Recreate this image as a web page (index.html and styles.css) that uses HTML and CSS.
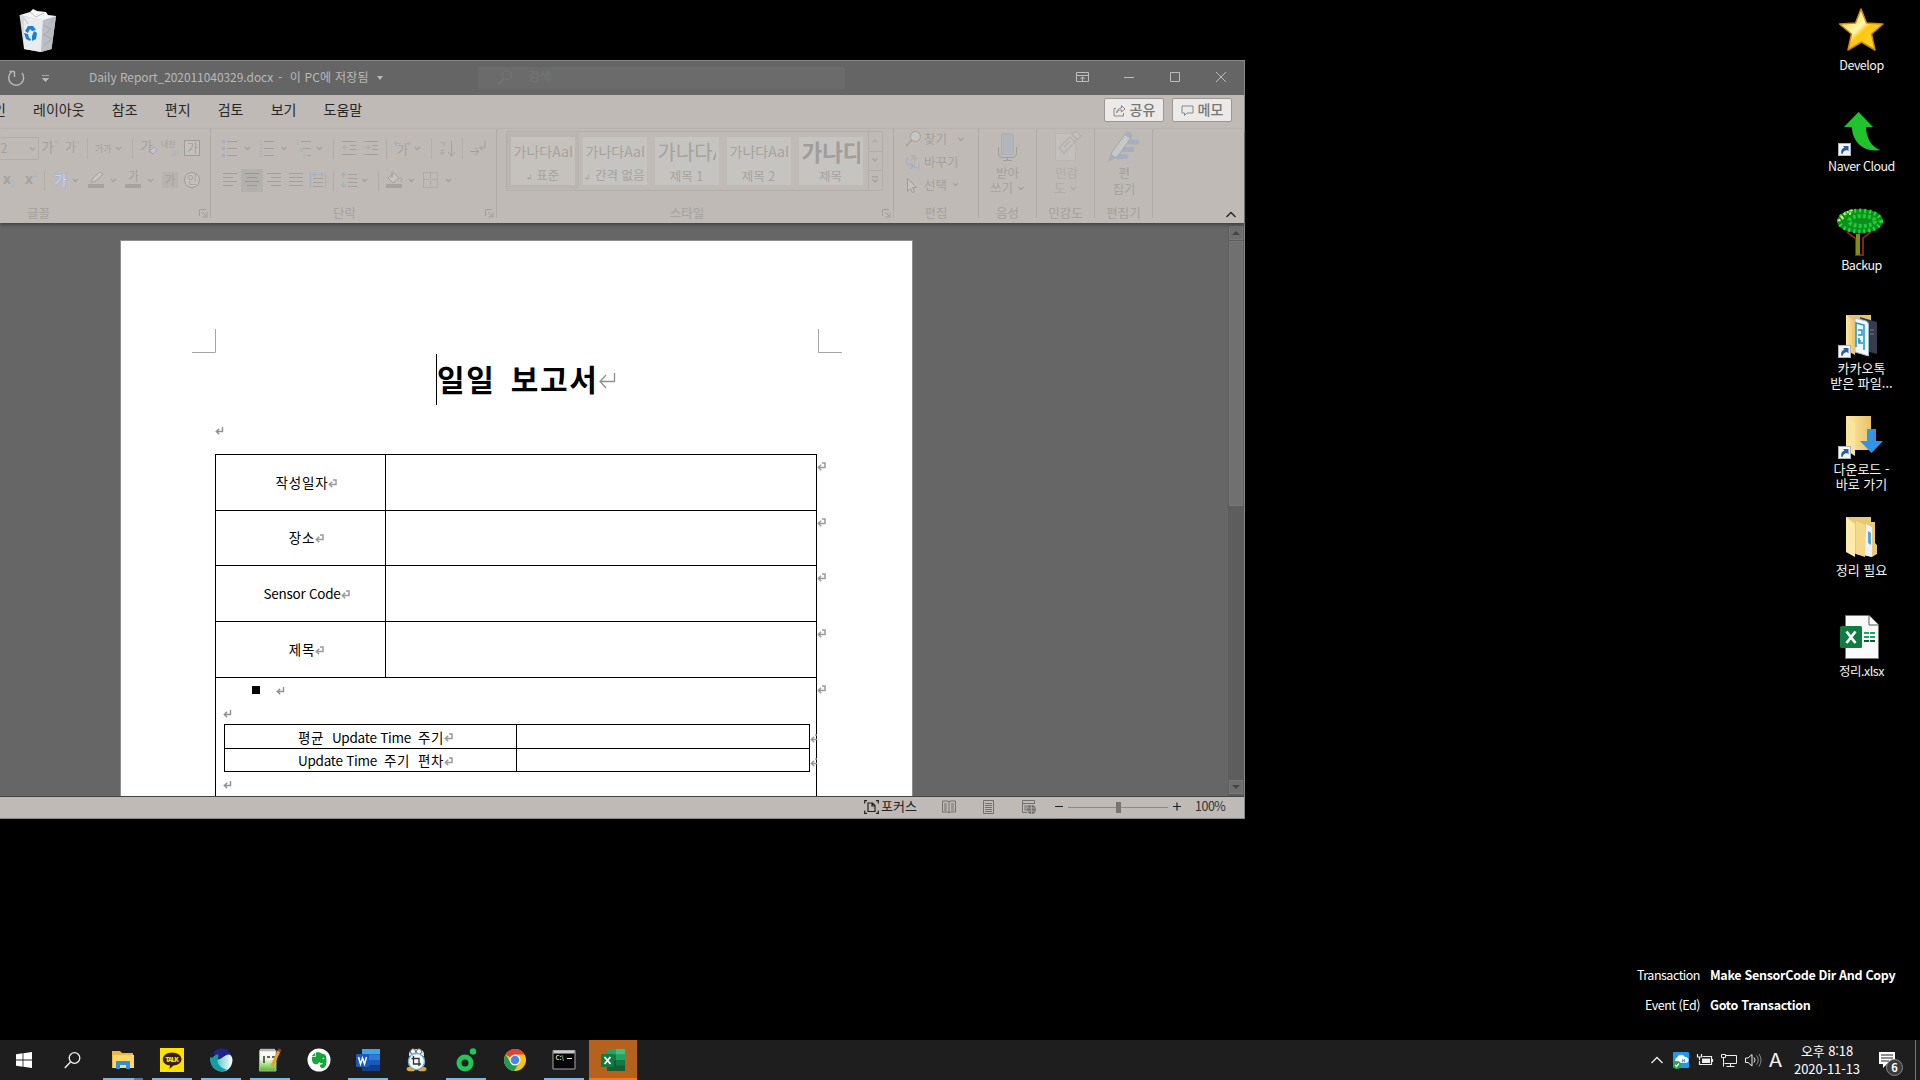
FILE: index.html
```html
<!DOCTYPE html>
<html lang="ko">
<head>
<meta charset="utf-8">
<title>Daily Report_202011040329.docx</title>
<link rel="stylesheet" href="styles.css">
</head>
<body>
<svg class="defs" width="0" height="0" aria-hidden="true">
  <defs>
    <symbol id="ret" viewBox="0 0 9 9"><path d="M5 1H8V5.500H1.500M4.200 2.800L1.300 5.500 4.200 8.200" fill="none" stroke="#9a9a9a" stroke-width="1.500"/></symbol>
    <symbol id="para" viewBox="0 0 9 9"><path d="M7.500 1V5.500H1.500M4.200 2.800L1.300 5.500 4.200 8.200" fill="none" stroke="#8f8f8f" stroke-width="1.400"/></symbol>
    <symbol id="chev" viewBox="0 0 8 6"><path d="M1.500 1.500L4 4 6.500 1.500" fill="none" stroke="#a5a19d" stroke-width="1.300"/></symbol>
    <symbol id="launch" viewBox="0 0 9 9"><path d="M.5 7V.5H7M3 3L7.500 7.500M8 3.500V8H3.500" fill="none" stroke="#a19d99"/></symbol>
    <symbol id="shortcut" viewBox="0 0 13 13"><rect x=".5" y=".5" width="12" height="12" fill="#f4f6f9" stroke="#a9b3bd"/><path d="M3.500 11C2.500 7 4.500 5 6.500 4.500L5 3H10.500V8.500L9 7C6.500 7.500 5 8.500 4.500 11Z" fill="#2c5d9e"/></symbol>
    <linearGradient id="fold" x1="0" x2="1"><stop offset="0" stop-color="#ffe9a6"/><stop offset="1" stop-color="#e8c268"/></linearGradient>
    <linearGradient id="gold" x1="0" x2="1" y2="1"><stop offset="0" stop-color="#ffce1c"/><stop offset=".45" stop-color="#fff7b0"/><stop offset=".55" stop-color="#ffc60d"/><stop offset="1" stop-color="#ffe24a"/></linearGradient>
    <linearGradient id="npp" x1="0" x2="0" y1="0" y2="1"><stop offset="0" stop-color="#fff"/><stop offset=".45" stop-color="#e9f7d8"/><stop offset="1" stop-color="#58b81d"/></linearGradient>
    <linearGradient id="whale" x1="0" x2="1"><stop offset="0" stop-color="#1ba8b0"/><stop offset=".6" stop-color="#9fe0de"/><stop offset="1" stop-color="#fff"/></linearGradient>
  </defs>
</svg>

<main class="desktop">
  <div class="shortcut bin">
    <svg width="40" height="46" viewBox="18 6 40 46"><path d="M19.500 15L56 16 51.500 49 41 52 24 49Z" fill="#d5d9dd"/><path d="M24 17L43 20 41 52 24 49Z" fill="#e9ecef"/><path d="M43 20L56 16 51.500 49 41 52Z" fill="#b9bec3"/><path d="M20 15L30 12 33 9 37 11 46 12 48 15 56 16 43 20Z" fill="#f5f6f7"/><path d="M43 25l8 4-7 6 8 4-8 6M56 17l-6 6M30 12l6 5 8-4M24 18l4 6" stroke="#969ca3" fill="none" opacity=".6"/><path d="M25 31L28 26 33 26 36 30 32 31 30 29 28 33ZM34 31L37 33 36 39 32 41 32 36ZM24 33L28 34 29 38 31 39 30 41 26 39Z" fill="#1680d8"/></svg>
  </div>
  <div class="shortcut develop">
    <svg width="46" height="46" viewBox="1838 6 46 46"><path d="M1861 9L1866.500 23 1883 24 1871.500 34 1875 50 1861.500 42 1848 50 1851.500 34 1839.500 24 1855.500 23Z" fill="url(#gold)" stroke="#c98a10" stroke-width="1.500" stroke-linejoin="round"/></svg>
    <span class="name en">Develop</span>
  </div>
  <div class="shortcut naver">
    <svg width="46" height="46" viewBox="1838 111 46 46"><path d="M1858.500 112L1873 127H1866C1866 138 1872 148 1881 150 1864 153 1852 142 1852 127H1844Z" fill="#1fc32c"/><use href="#shortcut" x="1838" y="143" width="13" height="13"/></svg>
    <span class="name en">Naver Cloud</span>
  </div>
  <div class="shortcut backup">
    <svg width="50" height="48" viewBox="1837 208 50 48"><path d="M1848 232L1857 239V255H1864V238L1872 232" fill="none" stroke="#7a2b12" stroke-width="2"/><path d="M1857 234H1861V255H1857Z" fill="#8b8a12"/><ellipse cx="1861" cy="221" rx="23" ry="12" fill="#0b8f1c"/><ellipse cx="1861" cy="221" rx="21" ry="10.500" fill="none" stroke="#1fdc35" stroke-width="4" stroke-dasharray="2 3"/><ellipse cx="1863" cy="221" rx="13" ry="5" fill="none" stroke="#22c83a" stroke-width="4" stroke-dasharray="3 2"/><path d="M1840 221q3-8 14-11M1843 219l3-3M1850 214l4-1" stroke="#dff77c" stroke-width="2" stroke-dasharray="2 2" fill="none"/></svg>
    <span class="name en">Backup</span>
  </div>
  <div class="shortcut kakao">
    <svg width="46" height="46" viewBox="1838 313 46 46"><path d="M1846 315H1871V330H1846Z" fill="#e9c46e"/><path d="M1860 317L1877 322V354L1866 351Z" fill="#343c4e"/><path d="M1855 318L1866 321Q1869 322 1868.500 326V356L1855 352Z" fill="#f3f8fb" stroke="#9db9c9"/><path d="M1856 347V323L1864 325V350M1858 330h4v5h-4M1859 338v5h4M1858 341h3" fill="none" stroke="#1a96cf" stroke-width="1.500"/><path d="M1846 315L1855 322V355L1846 350Z" fill="url(#fold)"/><path d="M1870 330h4M1870 334h4" stroke="#79808f"/><use href="#shortcut" x="1838" y="345" width="13" height="13"/></svg>
    <span class="name">카카오톡<br>받은 파일...</span>
  </div>
  <div class="shortcut download">
    <svg width="46" height="46" viewBox="1838 414 46 46"><path d="M1846 416H1871V450H1846Z" fill="url(#fold)"/><path d="M1846 416L1855 423V456L1846 450Z" fill="#fbe49c"/><path d="M1867 429H1876V441H1883L1871.500 453 1860 441H1867Z" fill="#3195e6"/><use href="#shortcut" x="1838" y="446" width="13" height="13"/></svg>
    <span class="name">다운로드 -<br>바로 가기</span>
  </div>
  <div class="shortcut tidy">
    <svg width="46" height="46" viewBox="1838 515 46 46"><path d="M1846 517H1871V522L1875 522V543L1877 545V554L1872 557 1846 552Z" fill="#ebc972"/><path d="M1866 524L1872 527V557L1865 555Z" fill="#edf3f7"/><path d="M1868 531l3 2v12l-3-2Z" fill="#5da3d0"/><path d="M1856 521L1865 525V557L1856 554Z" fill="#f4d98b"/><path d="M1846 517L1855 524V557L1846 552Z" fill="#ffebac"/></svg>
    <span class="name">정리 필요</span>
  </div>
  <div class="shortcut excel">
    <svg width="46" height="46" viewBox="1838 614 46 46"><path d="M1845.500 615.500H1869L1878.500 625V658.500H1845.500Z" fill="#fafafa" stroke="#777"/><path d="M1869 615.500V625H1878.500" fill="#fff" stroke="#555"/><path d="M1864 632h5v2h-5zM1870 632h5v2h-5zM1864 636h5v2h-5zM1870 636h5v2h-5z" fill="#21a366"/><path d="M1864 640h5v2h-5zM1870 640h5v2h-5z" fill="#0f5c36"/><rect x="1840" y="626" width="22" height="22" rx="1.500" fill="#107c41"/><path d="M1846.500 631.500L1855.500 643M1855.500 631.500L1846.500 643" stroke="#fff" stroke-width="2.700"/></svg>
    <span class="name en">정리.xlsx</span>
  </div>

  <section class="window">
    <header class="titlebar">
      <svg class="quick" width="60" height="34" viewBox="0 61 60 34"><path d="M22 73A7.500 7.500 0 1 1 12 71.500M9.500 71.500H14.500M14.500 71.500V77" fill="none" stroke="#b9b9b9" stroke-width="1.400"/><path d="M42 75.500H49M42.500 78.500H48.500L45.500 81.500Z" fill="#b9b9b9" stroke="#b9b9b9" stroke-width=".8"/></svg>
      <div class="doc-name"><span class="file">Daily Report_202011040329.docx</span><span class="saved">- &nbsp;이 PC에 저장됨</span><i class="caret-down"></i></div>
      <div class="search"><svg width="17" height="17" viewBox="0 0 17 17"><circle cx="10" cy="6" r="4.500" fill="none" stroke="#767676"/><path d="M7 9.500L1 15.500" stroke="#767676" stroke-width="1.500"/></svg><span>검색</span></div>
      <svg class="controls" width="160" height="34" viewBox="1070 61 160 34"><g fill="none" stroke="#bdbdbd"><path d="M1076.500 72.500H1088.500V81.500H1076.500ZM1076.500 75.500H1088.500M1082.500 81V77M1080.500 79L1082.500 76.800 1084.500 79M1124 77.500H1134M1170.500 72.500H1179.500V81.500H1170.500ZM1216 72L1226 82M1226 72L1216 82"/></g></svg>
    </header>

    <nav class="tabs">
      <span class="tab-cut">인</span><span>레이아웃</span><span>참조</span><span>편지</span><span>검토</span><span>보기</span><span>도움말</span>
      <div class="actions">
        <button class="act"><svg width="13" height="13" viewBox="0 0 13 13"><path d="M3 4.500H1V12H10.500V9M3.500 9C4 5.500 6 4 8.500 4V1.500L12 5 8.500 8V6C6 6 4.500 7 3.500 9Z" fill="none" stroke="#888"/></svg><span>공유</span></button>
        <button class="act"><svg width="13" height="13" viewBox="0 0 13 13"><path d="M1 2H12V9H6L3.500 11.500V9H1Z" fill="none" stroke="#888"/></svg><span>메모</span></button>
      </div>
    </nav>

    <div class="ribbon">
      <div class="group g-font">
        <svg width="210" height="70" viewBox="0 129 210 70">
          <g class="rt"><path d="M-5 137.500H38.500V159.500H-5" fill="none" stroke="#b1aca9"/>
          <text x="-7" y="153" font-size="13">22</text><text x="41" y="152" font-size="14">가</text><text x="65" y="152" font-size="12">가</text>
          <text x="95" y="152" font-size="9">가가</text><text x="140" y="151" font-size="14">가</text>
          <text x="161" y="147" font-size="8">내천</text><text x="171" y="156" font-size="8" fill="#a9b1bd">川</text>
          <rect x="184.500" y="140.500" width="15" height="15" fill="#c3c0bd" stroke="#9f9b98"/><text x="187" y="153" font-size="12">가</text>
          <text x="3" y="184" font-size="14" font-weight="700">x</text><text x="11" y="187" font-size="7" fill="#a3b4cc">2</text>
          <text x="25" y="184" font-size="14" font-weight="700">x</text><text x="33" y="177" font-size="7" fill="#a3b4cc">2</text>
          <text x="54" y="185" font-size="14" stroke="#a9b8cf" stroke-width="2" paint-order="stroke" fill="#ccd2da">가</text>
          <text x="128" y="181" font-size="12">가</text><rect x="162" y="172" width="16" height="16" fill="#b8b3af"/><text x="164.500" y="185" font-size="12">가</text>
          <circle cx="192" cy="180" r="7.500" fill="#c4c1be" stroke="#a19d99"/><text x="187" y="184" font-size="11">인</text></g>
          <path d="M53.500 143L56 140.500 58.500 143M75.500 141L78 143.500 80.500 141" fill="none" stroke="#a3b0c2"/>
          <path d="M150 151l4-4 3 3-4 4zM150 151l2.500 3.500" fill="#cdbfcb" stroke="#b39fb2"/>
          <path d="M91 182l2-4 7-6 3 2-6 6-4 2z" fill="#c9c6c3" stroke="#a39f9b"/>
          <path d="M88 184h16v4H88zM125 184h16v4h-16z" fill="#a6a29f"/>
          <path class="sep" d="M87.500 138v21M132.500 138v21M44.500 170v21"/>
          <use href="#chev" x="28.500" y="146" width="8" height="6"/><use href="#chev" x="114.500" y="145.500" width="8" height="6"/><use href="#chev" x="71.500" y="177.500" width="8" height="6"/><use href="#chev" x="109.500" y="177.500" width="8" height="6"/><use href="#chev" x="146.500" y="177.500" width="8" height="6"/>
        </svg>
        <span class="glabel">글꼴</span><svg class="launcher" width="9" height="9"><use href="#launch"/></svg>
      </div>
      <div class="group g-para">
        <svg width="285" height="70" viewBox="211 129 285 70">
          <g fill="none" stroke="#a39f9b">
            <path d="M227 141.500h10M227 148.500h10M227 155.500h10M264 141.500h10M264 148.500h10M264 155.500h10M301 141.500h10M303 148.500h8M307 155.500h4"/>
            <path d="M342 141.500h14M350 145.500h6M350 149.500h6M342 154.500h14M364 141.500h14M372 145.500h6M372 149.500h6M364 154.500h14"/>
            <path d="M451.500 141v15M448 152l3.500 4 3.500-4M470 151.500h8M475 148l4 3.500-4 3.500M485 141v7h-5M482 145.500l-2.500 2.500 2.500 2.500"/>
            <path d="M223 173.500h14M223 177.500h10M223 181.500h14M223 185.500h10M267 173.500h14M271 177.500h10M267 181.500h14M271 185.500h10M289 173.500h14M289 177.500h14M289 181.500h14M289 185.500h14M313 178.500h10M313 182.500h10M313 186.500h10M348 174.500h9M348 178.500h9M348 182.500h9M348 186.500h9"/>
          </g>
          <rect x="241" y="169" width="22" height="23" fill="#b2b0ac"/><path d="M245 173.500h14M247 177.500h10M245 181.500h14M247 185.500h10" stroke="#9a9794"/>
          <path d="M222 140h3v3h-3zM222 147h3v3h-3zM222 154h3v3h-3z" fill="#a3afc0"/>
          <g fill="none" stroke="#a3b1c6" stroke-width="1.200"><path d="M343 147.500h6M345.500 145l-2.500 2.500 2.500 2.500M364 147.500h6M367.500 145l2.500 2.500-2.500 2.500M395 143.500h6M397 141l-2.500 2.500 2.500 2.500M404 143.500h6M407.500 141l2.500 2.500-2.500 2.500M310.500 172v16M325.500 172v16M313 174.500h10M315 172.500l-2 2 2 2M321 172.500l2 2-2 2M343.500 173v5M341 175.500l2.500-2.500 2.500 2.500M343.500 182v5M341 184.500l2.500 2.500 2.500-2.500"/></g>
          <g class="rt"><text x="259" y="145" font-size="6" fill="#a3afc0">1</text><text x="259" y="151.500" font-size="6" fill="#a3afc0">2</text><text x="259" y="158" font-size="6" fill="#a3afc0">3</text><text x="296" y="145" font-size="6" fill="#a3afc0">1</text><text x="299" y="151.500" font-size="7" fill="#a3afc0">a</text><text x="303" y="158" font-size="7" fill="#a3afc0">i</text><text x="397" y="155" font-size="12">가</text><text x="438.500" y="147" font-size="8">ㄱ</text><text x="438.500" y="155" font-size="8">ㅎ</text></g>
          <path d="M388 178l6-5 5 5-6 5zM392 178v-7M400 177q3 2 1 5" fill="#c6c3c0" stroke="#a39f9b"/><path d="M386 184h16v4h-16z" fill="#a6a29f"/>
          <path d="M423.500 172.500h14v15h-14zM430.500 173v14M424 179.500h14" fill="none" stroke="#a39f9b" stroke-dasharray="1 1"/>
          <path class="sep" d="M333.500 138v21M386.500 138v21M431.500 138v21M462.500 138v21M333.500 170v21M378.500 170v21"/>
          <use href="#chev" x="243.500" y="145.500" width="8" height="6"/><use href="#chev" x="280" y="145.500" width="8" height="6"/><use href="#chev" x="315.500" y="145.500" width="8" height="6"/><use href="#chev" x="413.500" y="145.500" width="8" height="6"/><use href="#chev" x="360.500" y="177.500" width="8" height="6"/><use href="#chev" x="407.500" y="177.500" width="8" height="6"/><use href="#chev" x="444.500" y="177.500" width="8" height="6"/>
        </svg>
        <span class="glabel">단락</span><svg class="launcher" width="9" height="9"><use href="#launch"/></svg>
      </div>
      <div class="group g-styles">
        <div class="gallery">
          <div class="tile sel"><b class="s">가나다AaB</b><em><small>↲</small> 표준</em></div>
          <div class="tile"><b class="s">가나다AaB</b><em><small>↲</small> 간격 없음</em></div>
          <div class="tile"><b class="l">가나다A</b><em>제목 1</em></div>
          <div class="tile"><b class="s">가나다AaB</b><em>제목 2</em></div>
          <div class="tile"><b class="x">가나다</b><em>제목</em></div>
          <div class="spin"><svg width="8" height="6" class="up"><use href="#chev"/></svg><svg width="8" height="6"><use href="#chev"/></svg><svg width="8" height="8" viewBox="0 0 8 8"><path d="M1 .8H7M1.500 3.500L4 6 6.500 3.500" fill="none" stroke="#a19d99" stroke-width="1.200"/></svg></div>
        </div>
        <span class="glabel">스타일</span><svg class="launcher" width="9" height="9"><use href="#launch"/></svg>
      </div>
      <div class="group g-edit">
        <svg width="84" height="70" viewBox="894 129 84 70">
          <circle cx="915.500" cy="136.500" r="5" fill="#c8c6c3" stroke="#a39f9b"/><path d="M912 140L906 146" stroke="#a39f9b" stroke-width="1.500"/>
          <g class="rt"><text x="924" y="144" font-size="12.500">찾기</text><text x="924" y="167" font-size="12.500">바꾸기</text><text x="924" y="190" font-size="12.500">선택</text><text x="910" y="161" font-size="7">가</text><text x="913" y="169" font-size="8" fill="#a3b1c6">나</text></g>
          <path d="M908 157q-5 8 5 9M910 163l3.500 3-3.500 3" fill="none" stroke="#a3b1c6" stroke-width="1.500"/>
          <path d="M907.500 178.500V191.500L910.500 188.500 912.500 192.500 914.500 191.500 912.500 187.500H916.500Z" fill="#c5c3c0" stroke="#9f9b98"/>
          <use href="#chev" x="957" y="136.500" width="8" height="6"/><use href="#chev" x="951.500" y="181.500" width="8" height="6"/>
        </svg>
        <span class="glabel">편집</span>
      </div>
      <div class="group g-small">
        <svg width="57" height="70" viewBox="979 129 57 70">
          <rect x="1001.500" y="133.500" width="12" height="21" rx="1" fill="#b2b6bb" stroke="#a4b0c2"/><path d="M998.500 147V153Q998.500 157.500 1003 157.500H1012Q1016.500 157.500 1016.500 153V147M1007.500 157.500V160.500M1003 160.500H1012" fill="none" stroke="#a19d99"/>
          <g class="rt"><text x="996" y="178" font-size="12.500">받아</text><text x="990" y="193" font-size="12.500">쓰기</text></g><use href="#chev" x="1017" y="185.500" width="8" height="6"/>
        </svg>
        <span class="glabel">음성</span>
      </div>
      <div class="group g-small">
        <svg width="57" height="70" viewBox="1037 129 57 70">
          <rect x="1055.500" y="133.500" width="20" height="27" fill="#c3bfbc" stroke="#b9b5b1"/><path d="M1059 148l11-11 5 5-11 11zM1064 147l6-6M1072 134l4-3 5 5-4 4z" fill="#c3c0bc" stroke="#b3afac" stroke-width="1.300"/>
          <g class="rt dim"><text x="1055" y="178" font-size="12.500">민감</text><text x="1054" y="193" font-size="12.500">도</text></g><use href="#chev" x="1069.500" y="185.500" width="8" height="6" opacity=".6"/>
        </svg>
        <span class="glabel">민감도</span>
      </div>
      <div class="group g-small">
        <svg width="57" height="70" viewBox="1095 129 57 70">
          <path d="M1130 142h7M1124 149.500h8M1118 156.500h8" stroke="#a4b0c2" stroke-width="5" stroke-linecap="round"/><path d="M1109 161l3-9 14-19 6 3-14 20z" fill="#c8c7c5" stroke="#a4a6aa"/><path d="M1109 161l2.500-7 4.500 3.500zM1124.500 135l3-4 5 3-2.500 4.500z" fill="#a4b0c2"/>
          <g class="rt"><text x="1118.500" y="178" font-size="12.500">편</text><text x="1112.500" y="193.500" font-size="12.500">집기</text></g>
        </svg>
        <span class="glabel">편집기</span>
      </div>
      <svg class="collapse" width="12" height="8" viewBox="0 0 12 8"><path d="M1.500 6L6 1.500 10.500 6" fill="none" stroke="#222" stroke-width="1.300"/></svg>
    </div>

    <div class="workspace">
      <article class="page">
        <svg class="corner left" width="24" height="24"><path d="M23.500 0V23.500H0" fill="none" stroke="#a6a6a6"/></svg>
        <svg class="corner right" width="24" height="24"><path d="M.5 0V23.500H24" fill="none" stroke="#a6a6a6"/></svg>
        <h1><i class="cursor"></i><span>일일 보고서</span><svg width="17" height="17" viewBox="0 0 17 17"><path d="M15.500 0V8.500H1M7 2L1 8.500 7 15" fill="none" stroke="#8f8f8f" stroke-width="1.300"/></svg></h1>
        <p class="blank"><svg class="mk"><use href="#para"/></svg></p>
        <div class="table">
          <div class="row"><div class="key"><span>작성일자</span><svg class="mk"><use href="#ret"/></svg></div><svg class="mk end"><use href="#ret"/></svg></div>
          <div class="row odd"><div class="key"><span>장소</span><svg class="mk"><use href="#ret"/></svg></div><svg class="mk end"><use href="#ret"/></svg></div>
          <div class="row"><div class="key"><span class="latin">Sensor Code</span><svg class="mk"><use href="#ret"/></svg></div><svg class="mk end"><use href="#ret"/></svg></div>
          <div class="row"><div class="key"><span>제목</span><svg class="mk"><use href="#ret"/></svg></div><svg class="mk end"><use href="#ret"/></svg></div>
          <div class="body-row">
            <p class="bullet"><i></i><svg class="mk"><use href="#para"/></svg></p>
            <p class="line"><svg class="mk"><use href="#para"/></svg></p>
            <div class="inner">
              <div class="irow"><div class="ik"><span class="wide">평균 </span><span class="latin">Update Time </span><span class="wide lead">주기</span><svg class="mk"><use href="#ret"/></svg></div><div class="cut"><svg class="mk"><use href="#ret"/></svg></div></div>
              <div class="irow last"><div class="ik"><span class="latin">Update Time </span><span class="wide lead">주기 편차</span><svg class="mk"><use href="#ret"/></svg></div><div class="cut"><svg class="mk"><use href="#ret"/></svg></div></div>
            </div>
            <p class="line after"><svg class="mk"><use href="#para"/></svg></p>
            <svg class="mk end"><use href="#ret"/></svg>
          </div>
        </div>
      </article>
      <div class="scroll">
        <div class="sbtn"><i class="tri-up"></i></div><div class="thumb"></div><div class="sbtn down"><i class="tri-down"></i></div>
      </div>
    </div>

    <footer class="status">
      <svg width="15" height="14" viewBox="0 0 15 14"><path d="M3 .7H.7V3.500M12 .7h2.300V3.500M3 13.300H.7V10.500M12 13.300h2.300V10.500M4 3H8.500L11 5.500V11.500H4ZM8 3V6H11" fill="none" stroke="#222" stroke-width="1.200"/></svg>
      <span class="focus">포커스</span>
      <svg class="read" width="14" height="14" viewBox="0 0 14 14"><path d="M.5 1H6L7 2 8 1H13.500V12H8L7 13 6 12H.5ZM7 2V13M2 4h3M2 6h3M2 8h3M2 10h3M9 4h3M9 6h3M9 8h3M9 10h3" fill="none" stroke="#737170"/></svg>
      <svg class="print" width="12" height="14" viewBox="0 0 12 14"><path d="M.5.5H10.500V13.500H.5ZM2 3.500h7M2 5.500h7M2 7.500h7M2 9.500h7M2 11.500h7" fill="none" stroke="#737170"/></svg>
      <svg class="web" width="15" height="14" viewBox="0 0 15 14"><path d="M12.500 4V.5H.5V12.500H5M.5 3.500h12M2 6h5M2 8h3M2 10h3" fill="none" stroke="#737170"/><circle cx="9.500" cy="9.500" r="4.500" fill="#737170"/><path d="M5.500 8h8M5.500 11h8M9.500 5v9" stroke="#bfbab6" stroke-width=".7"/></svg>
      <svg class="zoom" width="128" height="14" viewBox="1054 800 128 14"><path d="M1055 806.500h8M1173 806.500h8M1177 802.500v8" stroke="#222" stroke-width="1.200"/><path d="M1068 807.500h100" stroke="#8d8986"/><rect x="1116" y="802" width="5" height="11" fill="#777472"/></svg>
      <span class="pct">100%</span>
    </footer>
  </section>

  <aside class="overlay">
    <span class="k">Transaction</span><span class="v">Make SensorCode Dir And Copy</span>
    <span class="k">Event (Ed)</span><span class="v">Goto Transaction</span>
  </aside>
</main>

<footer class="taskbar">
  <div class="item sys"><svg width="16" height="16" viewBox="0 0 16 16"><path d="M0 2.200L6.600 1.300V7.600H0ZM7.400 1.200L16 0V7.600H7.400ZM0 8.400H6.600V14.700L0 13.800ZM7.400 8.400H16V16L7.400 14.800Z" fill="#fff"/></svg></div>
  <div class="item sys two"><svg width="17" height="17" viewBox="0 0 17 17"><circle cx="10.500" cy="6" r="5.300" fill="none" stroke="#f2f2f2" stroke-width="1.300"/><path d="M6.500 10L.8 16" stroke="#f2f2f2" stroke-width="1.400"/></svg></div>
  <div class="item run multi"><svg width="22" height="18" viewBox="0 0 22 18"><path d="M0 0H8L10 2H21V17H0Z" fill="#f0b73f"/><path d="M1 4H22V17H1Z" fill="#ffd869"/><path d="M4 18V10H18V18H14V14H8V18Z" fill="#2f8fd8"/></svg></div>
  <div class="item run"><svg width="24" height="24" viewBox="0 0 24 24"><path d="M0 0H24V24H0Z" fill="#fde100"/><path d="M12 4.500C6.500 4.500 2.800 7.500 2.800 11.300S6.500 17.500 10 17.500L9.500 21 13.500 17.600C18 17.300 21.500 14.800 21.500 11.300S17.500 4.500 12 4.500Z" fill="#3b1e1e"/><text x="5.300" y="13.500" font-size="6.500" font-weight="900" textLength="13.500" fill="#fde100">TALK</text></svg></div>
  <div class="item run"><svg width="24" height="24" viewBox="0 0 24 24"><path d="M4 6C6 1.500 10 .5 13.500 .5S21 3 22.500 8L20 9 10 10Z" fill="#21248c"/><path d="M1 9.500C4 11 6 6.500 9 6.500 9.500 9 9 10 8 11.500 12 12 15 7 20 6.500 24.500 8 24 14 22 18 19 23 15 23.800 12 23.500 6 23 1 18 1 9.500Z" fill="url(#whale)"/><path d="M1 9.500C4 11 6 6.500 9 6.500 9.500 9 9 10 8 11.500 9 17 12 20 18 21.800 10 26 1 20 1 9.500Z" fill="#159ba9"/></svg></div>
  <div class="item run"><svg width="24" height="24" viewBox="0 0 24 24"><path d="M1.500 2.500H18V23H1.500Z" fill="url(#npp)" stroke="#aaa"/><path d="M2 .8h15v2.500H2z" fill="#b9b9b9"/><path d="M6 8v7M9 9h3M14 9h3" stroke="#333" stroke-width="1.500"/><path d="M21 3L14 18" stroke="#eaa21c" stroke-width="3"/><path d="M22 1L21 3.500" stroke="#b0342a" stroke-width="3"/></svg></div>
  <div class="item"><svg width="24" height="24" viewBox="0 0 24 24"><circle cx="12" cy="12" r="11.500" fill="#fff"/><path d="M5 8.800H9V4.500C11 3.800 13.500 4.300 14.500 5.500 18.500 6 19.500 7 19.500 12.500 19.500 18 18 20 15.500 20S12.500 17.500 13.500 16.500L15.500 16.300V15C13.500 15.500 12.500 14.500 12 14 11.500 16 10 16.500 8.500 16.300 5.500 16 4.500 12 5 8.800ZM4.800 8L8.200 4.800V8Z" fill="#14a83b"/><path d="M15 10.500q1.500-1.500 2.500 .5-1-.6-2.500-.5Z" fill="#fff"/></svg></div>
  <div class="item run"><svg width="24" height="22" viewBox="0 0 24 22"><path d="M6 0H24V5.500H6Z" fill="#41a5ee"/><path d="M6 5.500H24V11H6Z" fill="#2b7cd3"/><path d="M6 11H24V16.500H6Z" fill="#185abd"/><path d="M6 16.500H24V22H6Z" fill="#103f91"/><rect y="5" width="13" height="13" rx="1" fill="#185abd"/><path d="M2.500 8L4.500 15 6.500 9 8.500 15 10.500 8" fill="none" stroke="#fff" stroke-width="1.500"/></svg></div>
  <div class="item"><svg width="22" height="24" viewBox="0 0 22 24"><path d="M3 8Q2 1 10.500 1T18 8Z" fill="#d8e4ec"/><ellipse cx="7" cy="3.500" rx="2.500" ry="2.800" fill="#fff" stroke="#555"/><ellipse cx="13" cy="3.500" rx="2.500" ry="2.800" fill="#fff" stroke="#555"/><ellipse cx="5" cy="21" rx="4.500" ry="2.300" fill="#e6a429"/><ellipse cx="16" cy="21" rx="4.500" ry="2.300" fill="#e6a429"/><circle cx="10.500" cy="13.500" r="8" fill="#fff" stroke="#6eb6d8" stroke-width="1.500"/><path d="M7.500 8V16H15M5.500 10.500H13V18" fill="none" stroke="#333" stroke-width="1.400"/></svg></div>
  <div class="item run"><svg width="22" height="24" viewBox="0 0 22 24"><circle cx="10" cy="15" r="6" fill="none" stroke="#22c55a" stroke-width="5"/><circle cx="18" cy="3.500" r="3.200" fill="#22c55a"/></svg></div>
  <div class="item"><svg width="24" height="24" viewBox="0 0 24 24"><circle cx="12" cy="12" r="11" fill="#fbc315"/><path d="M12 12L2.500 6.500A11 11 0 0 1 21.500 6.500H12Z" fill="#dd4437"/><path d="M2.500 6.500A11 11 0 0 0 11 23L16.500 14.500 12 12 7.500 14.500Z" fill="#1c9d57"/><circle cx="12" cy="12" r="5.500" fill="#fff"/><circle cx="12" cy="12" r="4.300" fill="#4a86e8"/></svg></div>
  <div class="item run"><svg width="24" height="20" viewBox="0 0 24 20"><path d="M1 .5H23V19H1Z" fill="#050505" stroke="#aaa"/><path d="M1.500 1H22.500V3.500H1.500Z" fill="#c9ccd0"/><text x="3.500" y="10" font-size="6" font-weight="700" fill="#ddd">C:\</text><path d="M15 8.500h5" stroke="#eee"/></svg></div>
  <div class="item hot"><svg width="24" height="22" viewBox="0 0 24 22"><path d="M6 0H15V5.500H6Z" fill="#21a366"/><path d="M15 0H24V5.500H15Z" fill="#33c481"/><path d="M6 5.500H15V11H6Z" fill="#107c41"/><path d="M15 5.500H24V11H15Z" fill="#21a366"/><path d="M6 11H24V22H6Z" fill="#185c37"/><path d="M15 11H24V16.500H15Z" fill="#107c41"/><rect y="5" width="13" height="13" rx="1" fill="#107c41"/><path d="M3.500 8L9.500 15M9.500 8L3.500 15" stroke="#fff" stroke-width="1.800"/></svg></div>

  <div class="tray">
    <svg width="136" height="40" viewBox="1648 1040 136 40">
      <path d="M1651.500 1063L1657 1057.500 1662.500 1063" fill="none" stroke="#eee" stroke-width="1.300"/>
      <rect x="1673" y="1052" width="16" height="16" rx="1" fill="#2597ee"/><path d="M1677 1063a3 3 0 0 1 0-5.500 4.500 4.500 0 0 1 8-.5 3 3 0 0 1 1 6Z" fill="#fff"/><path d="M1682.500 1059v3.500M1684.500 1059v3.500M1682.500 1060.500h2" stroke="#2597ee" stroke-width=".8"/><circle cx="1677" cy="1065" r="4" fill="#22a84b"/><path d="M1675 1065l1.500 1.500 2.500-3" fill="none" stroke="#fff" stroke-width="1.300"/>
      <path d="M1702.500 1056.500H1711.500V1064.500H1699.500V1061M1712.500 1059v3M1697.500 1054v3h4v-3M1699.500 1057v3" fill="none" stroke="#eee" stroke-width="1.200"/><path d="M1702 1058.500H1710V1063H1702Z" fill="#eee"/>
      <path d="M1725.500 1055.500H1736.500V1063.500H1724.500M1730.500 1064v2.500M1726.500 1066.500h8M1721.500 1054.500h4v3h-4ZM1723.500 1058v8.500" fill="none" stroke="#eee"/>
      <path d="M1745.500 1058H1748L1752 1054.500V1066L1748 1062.500H1745.500Z" fill="none" stroke="#eee"/><path d="M1754 1057.500q2 2.500 0 5" fill="none" stroke="#eee"/><path d="M1756.500 1055.500q3.500 4.500 0 9M1759 1054q4 6 0 12.500" fill="none" stroke="#888"/>
      <text x="1769" y="1067" font-size="19" textLength="13" lengthAdjust="spacingAndGlyphs" fill="#f2f2f2">A</text>
    </svg>
    <div class="clock"><span>오후 8:18</span><span>2020-11-13</span></div>
    <svg class="notice" width="26" height="28" viewBox="1878 1050 26 28"><path d="M1879 1052H1895V1064H1887L1883 1068V1064H1879Z" fill="#fff"/><path d="M1881 1055h12M1881 1058h12M1881 1061h8" stroke="#222"/><circle cx="1894.500" cy="1067.500" r="8" fill="#3b3b3b" stroke="#8a8a8a"/><text x="1891.300" y="1071.500" font-size="11" font-weight="700" fill="#fff">6</text></svg>
    <i class="peek"></i>
  </div>
</footer>
</body>
</html>
```
FILE: styles.css
```css
* { box-sizing: border-box; }
body { margin: 0; width: 1920px; height: 1080px; overflow: hidden; background: #000; color: #fff; font: 12px "Noto Sans CJK KR", sans-serif; display: flex; flex-direction: column; }
svg { display: block; flex: none; }
svg text { font-family: "Noto Sans CJK KR", sans-serif; }
.defs { position: absolute; }
.desktop { position: relative; height: 1040px; flex: none; }

.shortcut { position: absolute; left: 1811px; width: 100px; display: flex; flex-direction: column; align-items: center; }
.name { font: 13px/15px "Noto Sans CJK KR", sans-serif; text-align: center; white-space: nowrap; color: #f4f4f4; margin: 1px 0 0 1px; }
.name.en { font-size: 12.500px; letter-spacing: -.5px; }
.bin { left: -12px; top: 6px; }
.develop { top: 6px; }
.develop .name { margin-top: 5px; }
.naver { top: 111px; }
.backup { top: 208px; }
.kakao { top: 313px; }
.download { top: 414px; }
.tidy { top: 515px; }
.excel { top: 614px; }
.excel .name { margin-top: 3px; }

.window { position: absolute; left: 0; top: 60px; width: 1245px; height: 759px; border: 1px solid #888; border-left: 0; display: flex; flex-direction: column; background: #666; }
.titlebar { height: 34px; flex: none; display: flex; align-items: center; background: #656565; color: #b9b9b9; }
.doc-name { margin-left: 29px; width: 389px; display: flex; align-items: center; white-space: pre; font-size: 12px; line-height: 18px; padding-bottom: 2px; }
.file { letter-spacing: -.07px; }
.saved { margin-left: 5px; letter-spacing: .2px; }
.caret-down { margin: 2px 0 0 8px; border: 3px solid transparent; border-top: 4px solid #b9b9b9; border-bottom: 0; }
.search { width: 367px; height: 22px; background: #6b6b6b; color: #767676; display: flex; align-items: center; padding-left: 19px; gap: 14px; font-size: 12.500px; line-height: 18px; margin-top: -1px; }
.search span { margin-top: -3px; }
.controls { margin-left: auto; margin-right: 14px; }

.tabs { height: 34px; flex: none; background: #bfbab6; color: #262626; display: flex; align-items: center; font-size: 14px; line-height: 20px; padding-bottom: 4px; }
.tabs > span { margin: -2px 27.200px 0 0; }
.tabs .tab-cut { margin-left: -7px; }
.actions { margin-left: auto; display: flex; gap: 8px; margin-right: 12px; }
.act { width: 60px; height: 24px; background: #ebeae8; border: 1px solid #9b9794; border-radius: 2px; color: #777; font: 500 14px/20px "Noto Sans CJK KR", sans-serif; display: flex; align-items: center; justify-content: center; gap: 4px; padding: 0; }
.act span { margin-top: -2px; }

.ribbon { height: 94px; flex: none; background: #bfbab6; display: flex; position: relative; box-shadow: 0 2px 3px #444; z-index: 1; }
.group { height: 89px; border-right: 1px solid #b0aba8; display: flex; flex-direction: column; align-items: center; position: relative; }
.g-font { width: 211px; }
.g-para { width: 286px; }
.g-styles { width: 397px; }
.g-edit { width: 85px; }
.g-small { width: 58px; }
.rt { fill: #a5a19d; }
.rt.dim { fill: #b0aca8; }
.sep { stroke: #b3aeaa; fill: none; }
.glabel { font-size: 12.500px; line-height: 18px; color: #a5a19d; margin-top: 5px; }
.g-font .glabel { align-self: flex-start; margin-left: 27px; }
.g-para .glabel { margin-right: 18px; }
.g-styles .glabel { margin-right: 16px; }
.launcher { position: absolute; right: 2px; bottom: 0; }
.collapse { position: absolute; left: 1225px; top: 82px; }
.gallery { width: 377px; height: 60px; margin: 2px 0 8px -2px; border: 1px solid #b2aeaa; display: flex; align-items: center; padding-left: 4px; gap: 8px; }
.tile { width: 64px; height: 48px; background: #c6c4c0; color: #a5a29f; display: flex; flex-direction: column; flex: none; }
.tile.sel { background: #c5c1bd; box-shadow: 0 0 0 4px #bab5b1; }
.tile b { font-weight: 400; height: 31px; line-height: 29px; margin: 0 3px; overflow: hidden; white-space: nowrap; }
.tile .s { font-size: 14px; }
.tile .l { font-size: 20px; }
.tile .x { font-size: 22.500px; font-weight: 700; color: #a09d9a; }
.tile em { font-style: normal; font-size: 12.500px; line-height: 16px; text-align: center; white-space: nowrap; }
.tile small { font-size: 8px; }
.spin { width: 15px; height: 58px; margin-left: -3px; display: flex; flex-direction: column; justify-content: space-around; align-items: center; border-left: 1px solid #b2aeaa; background: linear-gradient(#b2aeaa, #b2aeaa) 0 19px / 100% 1px no-repeat, linear-gradient(#b2aeaa, #b2aeaa) 0 38px / 100% 1px no-repeat; }
.up { transform: scaleY(-1); opacity: .6; }

.workspace { height: 573px; flex: none; display: flex; background: #666; overflow: hidden; }
.page { margin: 17px 0 0 120px; width: 793px; height: 561px; background: #fff; color: #000; border: 1px solid #8d8d8d; position: relative; font-size: 13.500px; flex: none; }
.corner { position: absolute; top: 88px; }
.corner.left { left: 71px; }
.corner.right { left: 697px; }
h1 { margin: 113px 0 0 315px; height: 51px; display: flex; align-items: center; font-size: 30px; line-height: 49px; font-weight: 700; white-space: pre; letter-spacing: 1.700px; word-spacing: 5px; }
h1 span { margin-top: -2px; }
h1 svg { margin: 4px 0 0 0; }
.cursor { width: 1px; height: 51px; background: #000; }
p { margin: 0; }
.mk { width: 9px; height: 9px; }
.blank { height: 49px; padding: 21px 0 0 94px; }
.table { width: 602px; margin-left: 94px; border: 1px solid #000; border-bottom: 0; height: 400px; }
.row { height: 56px; border-bottom: 1px solid #000; display: flex; position: relative; }
.row.odd { height: 55px; }
.key { width: 170px; border-right: 1px solid #000; padding: 0 0 2px 12px; display: flex; align-items: center; justify-content: center; letter-spacing: .8px; }
.key .mk { margin-top: 3px; }
.latin, .key .latin { letter-spacing: -.25px; }
.end { position: absolute; left: 601px; top: 7px; }
.body-row { position: relative; }
.bullet { height: 25px; display: flex; padding: 8px 0 0 36px; }
.bullet i { width: 8px; height: 8px; background: #000; margin-right: 16px; }
.line { height: 21px; padding: 6px 0 0 7px; }
.inner { width: 586px; margin-left: 8px; border: 1px solid #000; }
.irow { height: 24px; border-bottom: 1px solid #000; display: flex; position: relative; }
.irow.last { height: 22px; border-bottom: 0; }
.ik { width: 292px; border-right: 1px solid #000; padding-left: 10px; display: flex; align-items: center; justify-content: center; line-height: 22px; white-space: pre; }
.wide { letter-spacing: .6px; word-spacing: 3.500px; }
.lead { margin-left: 3.500px; }
.ik .mk { margin-top: 2px; }
.cut { position: absolute; left: 585px; top: 9px; width: 7px; height: 9px; overflow: hidden; }
.line.after { padding-top: 8px; }
.scroll { margin-left: auto; width: 16px; background: #5d5d5d; padding: 3px 1px 0; display: flex; flex-direction: column; }
.sbtn { width: 14px; height: 14px; background: #6d6d6d; border: 1px solid #777; display: flex; align-items: center; justify-content: center; }
.sbtn.down { margin-top: auto; margin-bottom: 2px; }
.thumb { margin-top: 1px; width: 14px; height: 265px; background: #707070; border: 1px solid #777; }
.tri-up { border: 4px solid transparent; border-bottom-color: #444; border-top: 0; }
.tri-down { border: 4px solid transparent; border-top-color: #444; border-bottom: 0; }

.status { height: 22px; flex: none; background: #bfbab6; border-top: 1px solid #444; color: #222; display: flex; align-items: center; padding-left: 864px; font-size: 13px; line-height: 18px; }
.status svg { margin-top: -1px; }
.focus { margin: -3px 0 0 2px; width: 61px; }
.print { margin-left: 27px; }
.web { margin-left: 27px; }
.zoom { margin-left: 17px; }
.pct { margin: -3px 0 0 13px; color: #333; font-size: 12.500px; letter-spacing: -.5px; }

.overlay { position: absolute; left: 1610px; top: 960px; display: grid; grid-template-columns: 90px auto; column-gap: 10px; grid-auto-rows: 30px; line-height: 30px; font-size: 12.500px; white-space: nowrap; }
.overlay .k { justify-self: end; letter-spacing: -.5px; }
.overlay .v { font-weight: 700; justify-self: start; letter-spacing: -.3px; }

.taskbar { height: 40px; flex: none; background: #1e1e1e; display: flex; }
.item { width: 49px; height: 40px; flex: none; display: flex; align-items: center; justify-content: center; }
.item.sys { width: 48px; }
.item.two { width: 50px; padding-right: 2px; }
.item.run { background: linear-gradient(#76b9ed, #76b9ed) 5px 38px / 40px 2px no-repeat; }
.item.multi { background: linear-gradient(90deg, #76b9ed 31px, #4d7fa8 31px) 5px 38px / 40px 2px no-repeat; }
.item.hot { width: 48px; margin-left: 1px; background: #b5621e; border-bottom: 2px solid #ff7a00; padding-top: 2px; }
.tray { margin-left: auto; display: flex; }
.clock { width: 86px; display: flex; flex-direction: column; align-items: center; justify-content: center; line-height: 18px; font-size: 13px; padding-bottom: 1px; letter-spacing: -.1px; }
.notice { margin: 10px 0 0 8px; }
.peek { width: 1px; background: #777; margin: 0 4px 0 11px; }
```
